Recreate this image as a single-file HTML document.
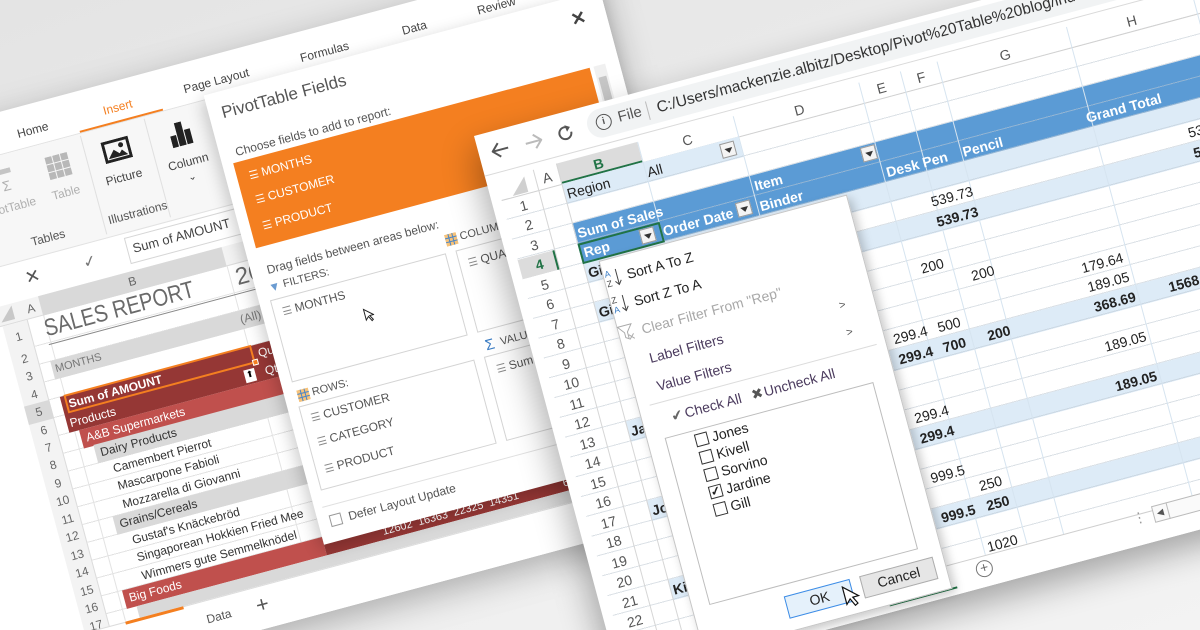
<!DOCTYPE html>
<html style="width:1200px;height:630px;overflow:hidden"><head><meta charset="utf-8"><style>
*{margin:0;padding:0;box-sizing:border-box}
body{width:1200px;height:630px;overflow:hidden;position:relative;background:linear-gradient(160deg,#e4e4e4 0%,#ececec 50%,#f3f3f3 100%);font-family:"Liberation Sans",sans-serif}
.win{position:absolute;left:0;top:0;width:0;height:0;transform-origin:0 0;transform:rotate(-15deg)}
.a{position:absolute}
.c{position:absolute;transform:translate(-50%,-50%);white-space:nowrap}
.l{position:absolute;white-space:nowrap;transform:translateY(-50%);line-height:16px}
#L{font-size:12px;color:#444}
#R{left:474px;top:136px;font-size:14px;color:#222}
.w{color:#fff}
.b{font-weight:bold}
.dd{position:absolute;width:15px;height:15px;background:#f4f4f4;border:1px solid #9a9a9a;transform:translate(-50%,-50%)}
.dd:after{content:"";position:absolute;left:3px;top:5px;border-left:4px solid transparent;border-right:4px solid transparent;border-top:5px solid #333}
.cb{position:absolute;width:13px;height:13px;border:1px solid #333;background:#fff;transform:translateY(-50%)}
.hb{position:absolute;width:8px;height:8px;border-top:1px solid;border-bottom:1px solid;transform:translateY(-50%)}
.hb:after{content:"";position:absolute;left:0;top:2.5px;width:8px;border-top:1px solid}
</style></head><body>

<!-- LEFT WINDOW -->
<div class="win" id="L">
  <div class="a" style="left:-260px;top:108px;width:842px;height:568px;background:#fff;box-shadow:0 10px 34px rgba(0,0,0,.28)"></div>
  <div class="a" style="left:-260px;top:149px;width:842px;height:1px;background:#e2e2e2"></div>
  <div class="c" style="left:-2px;top:134px">Home</div>
  <div class="c" style="left:86px;top:134px;color:#f47f20">Insert</div>
  <div class="c" style="left:188px;top:134px">Page Layout</div>
  <div class="c" style="left:300px;top:134px">Formulas</div>
  <div class="c" style="left:393px;top:134px">Data</div>
  <div class="c" style="left:478px;top:134px">Review</div>
  <div class="a" style="left:43px;top:147px;width:86px;height:2px;background:#f47f20"></div>
  <div class="a" style="left:-260px;top:150px;width:432px;height:108px;background:#f7f7f7;border-bottom:1px solid #e2e2e2"></div>
  <div class="a" style="left:42px;top:152px;width:1px;height:102px;background:#e0e0e0"></div>
  <div class="a" style="left:108px;top:152px;width:1px;height:102px;background:#e0e0e0"></div>
  <svg class="a" style="left:-58px;top:164px" width="28" height="26"><g fill="#c4c4c4"><rect x="0" y="0" width="24" height="5"/><rect x="0" y="7" width="7" height="5"/><rect x="0" y="14" width="7" height="5"/></g><text x="12" y="22" font-size="14" fill="#b0b0b0" font-family="Liberation Sans">Σ</text></svg>
  <svg class="a" style="left:2px;top:164px" width="24" height="24"><g fill="#b8b8b8"><rect x="0" y="0" width="7" height="7"/><rect x="8" y="0" width="7" height="7"/><rect x="16" y="0" width="7" height="7"/><rect x="0" y="8" width="7" height="7"/><rect x="8" y="8" width="7" height="7"/><rect x="16" y="8" width="7" height="7"/><rect x="0" y="16" width="7" height="7"/><rect x="8" y="16" width="7" height="7"/><rect x="16" y="16" width="7" height="7"/></g></svg>
  <svg class="a" style="left:60px;top:164px" width="28" height="22"><rect x="1.5" y="1.5" width="25" height="19" fill="none" stroke="#222" stroke-width="3"/><path d="M4 18 L11 10 L16 15 L19 12 L24 18Z" fill="#222"/><circle cx="19" cy="7" r="2.5" fill="#222"/></svg>
  <svg class="a" style="left:129px;top:164px" width="22" height="24"><g fill="#222"><rect x="0" y="12" width="6" height="12"/><rect x="7" y="0" width="7" height="24"/><rect x="15" y="9" width="6" height="15"/></g></svg>
  <div class="c" style="left:-45px;top:203px;color:#b0b0b0">PivotTable</div>
  <div class="c" style="left:14px;top:203px;color:#b0b0b0">Table</div>
  <div class="c" style="left:74px;top:203px">Picture</div>
  <div class="c" style="left:140px;top:205px">Column</div>
  <div class="c" style="left:140px;top:221px;font-size:10px">⌄</div>
  <div class="c" style="left:-15px;top:242px;color:#555">Tables</div>
  <div class="c" style="left:78px;top:241px;color:#555">Illustrations</div>
  <div class="c" style="left:-40px;top:276px;font-size:18px;color:#555">✕</div>
  <div class="c" style="left:19px;top:276px;font-size:16px;color:#777">✓</div>
  <div class="a" style="left:58px;top:262px;width:140px;height:27px;border:1px solid #d6d6d6;background:#fff"></div>
  <div class="l" style="left:64px;top:275px;font-size:13px">Sum of AMOUNT</div>
  <div class="a" style="left:-260px;top:296px;width:460px;height:20px;background:#f3f3f3;border-bottom:1px solid #dcdcdc"></div>
  <div class="a" style="left:-40px;top:296px;width:190px;height:20px;background:#d9d9d9"></div>
  <div class="c" style="left:-50px;top:306px;color:#666">A</div>
  <div class="c" style="left:55px;top:306px;color:#666">B</div>
  <div class="a" style="left:-82px;top:316px;width:26px;height:320px;background:#f3f3f3;border-right:1px solid #dcdcdc"></div>
  <div class="a" style="left:-82px;top:298px;width:0;height:0;border-left:14px solid transparent;border-bottom:14px solid #c8c8c8"></div>
  <div class="a" style="left:-56px;top:343px;width:640px;height:290px;background:repeating-linear-gradient(to bottom,#e3e3e3 0 1px,transparent 1px 18.45px)"></div>
  <div class="a" style="left:-40px;top:316px;width:1px;height:316px;background:#e3e3e3"></div>
  <div class="a" style="left:150px;top:316px;width:1px;height:316px;background:#e3e3e3"></div>
  <div class="l" style="left:-42px;top:330px;font-size:24px;color:#6a6a6a;transform:translateY(-50%) scaleX(.84);transform-origin:0 50%">SALES REPORT</div>
  <div class="l" style="left:156px;top:330px;font-size:24px;color:#6a6a6a">2017</div>
  <div class="a" style="left:-42px;top:345px;width:214px;height:1px;background:#888"></div>
  <div class="a" style="left:-45px;top:362px;width:217px;height:18.5px;background:#d9d9d9"></div>
  <div class="a" style="left:-45px;top:399px;width:627px;height:37px;background:#953735"></div>
  <div class="a" style="left:-35px;top:436px;width:617px;height:18.5px;background:#c0504d"></div>
  <div class="a" style="left:-25px;top:454px;width:607px;height:18.5px;background:#d9d9d9"></div>
  <div class="a" style="left:-25px;top:528px;width:607px;height:18.5px;background:#d9d9d9"></div>
  <div class="a" style="left:-35px;top:602px;width:207px;height:19px;background:#c0504d"></div>
  <div class="a" style="left:172px;top:602px;width:410px;height:19px;background:#953735"></div>
  <div class="a" style="left:-25px;top:621px;width:607px;height:12px;background:#d9d9d9"></div>
  <div class="a" style="left:-41px;top:398px;width:194px;height:19px;border:2px solid #f47f20"></div>
  <div class="a" style="left:150px;top:413px;width:6px;height:6px;background:#f47f20;border:1px solid #fff"></div>
  <div class="l" style="left:-42px;top:371px;font-size:11px;color:#777">MONTHS</div>
  <div class="c" style="left:160px;top:371px;color:#777">(All)</div>
  <div class="l w b" style="left:-38px;top:408px">Sum of AMOUNT</div>
  <div class="l w" style="left:158px;top:408px">Quarters</div>
  <div class="l w" style="left:-42px;top:427px">Products</div>
  <div class="a" style="left:139px;top:421px;width:11px;height:13px;background:#fff;font-size:9px;text-align:center;color:#000">⬆</div>
  <div class="l w" style="left:160px;top:427px">Qtr1</div>
  <div class="l w" style="left:-30px;top:445px">A&amp;B Supermarkets</div>
  <div class="l" style="left:-20px;top:463px;color:#333">Dairy Products</div>
  <div class="l" style="left:-12px;top:482px;color:#333">Camembert Pierrot</div>
  <div class="l" style="left:-12px;top:500px;color:#333">Mascarpone Fabioli</div>
  <div class="l" style="left:-12px;top:519px;color:#333">Mozzarella di Giovanni</div>
  <div class="l" style="left:-20px;top:537px;color:#333">Grains/Cereals</div>
  <div class="l" style="left:-12px;top:556px;color:#333">Gustaf's Knäckebröd</div>
  <div class="l" style="left:-12px;top:574px;color:#333">Singaporean Hokkien Fried Mee</div>
  <div class="l" style="left:-12px;top:593px;color:#333">Wimmers gute Semmelknödel</div>
  <div class="l w" style="left:-30px;top:611px">Big Foods</div>
  <div class="l w" style="left:232px;top:613px;font-size:11px">12602 &nbsp;16363 &nbsp;22325 &nbsp;14351 &nbsp;&nbsp;&nbsp;&nbsp;&nbsp;&nbsp;&nbsp;&nbsp;&nbsp;&nbsp;&nbsp;&nbsp;&nbsp;&nbsp;60683</div>
  <div class="c" style="left:-69px;top:330px;color:#666">1</div>
  <div class="c" style="left:-69px;top:352.6px;color:#666">2</div>
  <div class="c" style="left:-69px;top:371px;color:#666">3</div>
  <div class="c" style="left:-69px;top:389.5px;color:#666">4</div>
  <div class="a" style="left:-82px;top:399px;width:26px;height:18.5px;background:#d9d9d9"></div>
  <div class="c" style="left:-69px;top:408px;color:#666">5</div>
  <div class="c" style="left:-69px;top:426.5px;color:#666">6</div>
  <div class="c" style="left:-69px;top:445px;color:#666">7</div>
  <div class="c" style="left:-69px;top:463.4px;color:#666">8</div>
  <div class="c" style="left:-69px;top:481.9px;color:#666">9</div>
  <div class="c" style="left:-69px;top:500.3px;color:#666">10</div>
  <div class="c" style="left:-69px;top:518.8px;color:#666">11</div>
  <div class="c" style="left:-69px;top:537.2px;color:#666">12</div>
  <div class="c" style="left:-69px;top:555.7px;color:#666">13</div>
  <div class="c" style="left:-69px;top:574.1px;color:#666">14</div>
  <div class="c" style="left:-69px;top:592.6px;color:#666">15</div>
  <div class="c" style="left:-69px;top:611px;color:#666">16</div>
  <div class="c" style="left:-69px;top:629px;color:#666">17</div>
  <div class="a" style="left:-260px;top:633px;width:842px;height:43px;background:#fff;border-top:1px solid #dcdcdc"></div>
  <div class="a" style="left:-40px;top:633px;width:60px;height:3px;background:#f47f20"></div>
  <div class="c" style="left:52px;top:652px;color:#555">Data</div>
  <div class="c" style="left:97px;top:652px;font-size:22px;color:#555">+</div>
  <div class="a" style="left:172px;top:145px;width:410px;height:465px;background:#fff;box-shadow:-4px 4px 16px rgba(0,0,0,.2)"></div>
  <div class="l" style="left:185px;top:167px;font-size:17px;color:#555">PivotTable Fields</div>
  <div class="c" style="left:554px;top:168px;font-size:18px;color:#444;font-weight:bold">✕</div>
  <div class="l" style="left:188px;top:208px;color:#555">Choose fields to add to report:</div>
  <div class="a" style="left:183px;top:218px;width:369px;height:88px;background:#f47f20"></div>
  <div class="a" style="left:556px;top:218px;width:12px;height:88px;background:#f0f0f0"></div>
  <div class="a" style="left:558px;top:230px;width:8px;height:40px;background:#c6c6c6"></div>
  <div class="hb" style="left:196px;top:234px;color:#fff"></div><div class="l w" style="left:208px;top:234px">MONTHS</div>
  <div class="hb" style="left:196px;top:259px;color:#fff"></div><div class="l w" style="left:208px;top:259px">CUSTOMER</div>
  <div class="hb" style="left:196px;top:286px;color:#fff"></div><div class="l w" style="left:208px;top:286px">PRODUCT</div>
  <div class="l" style="left:188px;top:330px;color:#555">Drag fields between areas below:</div>
  <div class="c" style="left:191px;top:348px;color:#6a9bd1;font-size:12px">▼</div>
  <div class="l" style="left:200px;top:348px;color:#555;font-size:11px">FILTERS:</div>
  <svg class="a" style="left:368px;top:342px" width="12" height="12"><rect x="0" y="0" width="12" height="12" fill="#f6c27a"/><path d="M0 4H12M0 8H12M4 0V12M8 0V12" stroke="#4a86c8"/></svg>
  <div class="l" style="left:383px;top:348px;color:#555;font-size:11px">COLUMNS</div>
  <div class="a" style="left:183px;top:360px;width:182px;height:85px;border:1px solid #d4d4d4"></div>
  <div class="a" style="left:375px;top:360px;width:185px;height:85px;border:1px solid #d4d4d4"></div>
  <div class="hb" style="left:193px;top:374px;color:#888"></div><div class="l" style="left:205px;top:374px;color:#555">MONTHS</div>
  <div class="hb" style="left:385px;top:375px;color:#888"></div><div class="l" style="left:397px;top:375px;color:#555">QUARTERS</div>
  <svg class="a" style="left:270px;top:392px" width="10" height="15"><path d="M1 1V12L4 9L6.5 14L8 13L5.5 8.5L9.5 8.5Z" fill="#fff" stroke="#222"/></svg>
  <svg class="a" style="left:185px;top:454px" width="12" height="12"><rect x="0" y="0" width="12" height="12" fill="#f6c27a"/><path d="M0 4H12M0 8H12M4 0V12M8 0V12" stroke="#4a86c8"/></svg>
  <div class="l" style="left:200px;top:460px;color:#555;font-size:11px">ROWS:</div>
  <div class="c" style="left:384px;top:460px;color:#3b7dc4;font-size:15px">Σ</div>
  <div class="l" style="left:395px;top:460px;color:#555;font-size:11px">VALUES</div>
  <div class="a" style="left:183px;top:470px;width:182px;height:87px;border:1px solid #d4d4d4"></div>
  <div class="a" style="left:375px;top:470px;width:185px;height:87px;border:1px solid #d4d4d4"></div>
  <div class="hb" style="left:193px;top:484px;color:#888"></div><div class="l" style="left:205px;top:484px;color:#555">CUSTOMER</div>
  <div class="hb" style="left:193px;top:509px;color:#888"></div><div class="l" style="left:205px;top:509px;color:#555">CATEGORY</div>
  <div class="hb" style="left:193px;top:537px;color:#888"></div><div class="l" style="left:205px;top:537px;color:#555">PRODUCT</div>
  <div class="hb" style="left:385px;top:485px;color:#888"></div><div class="l" style="left:397px;top:485px;color:#555">Sum of AMOUNT</div>
  <div class="a" style="left:180px;top:573px;width:390px;height:1px;background:#e0e0e0"></div>
  <div class="a" style="left:184px;top:583px;width:12px;height:12px;border:1px solid #999"></div>
  <div class="l" style="left:203px;top:589px;color:#555">Defer Layout Update</div>
</div>

<!-- RIGHT WINDOW -->
<div class="win" id="R">
  <div class="a" style="left:0;top:0;width:930px;height:568px;background:#fff;box-shadow:-6px 14px 34px rgba(0,0,0,.32)"></div>
  <div class="a" style="left:0;top:41px;width:930px;height:1px;background:#dadada"></div>
  <svg class="a" style="left:13px;top:12px" width="18" height="16"><path d="M8 1L1 8L8 15M1 8H17" fill="none" stroke="#555" stroke-width="2"/></svg>
  <svg class="a" style="left:47px;top:13px" width="18" height="16"><path d="M10 1L17 8L10 15M17 8H1" fill="none" stroke="#bbb" stroke-width="2"/></svg>
  <svg class="a" style="left:80px;top:12px" width="18" height="18"><path d="M15 9A6 6 0 1 1 12.5 4" fill="none" stroke="#555" stroke-width="2"/><path d="M10 1L15 4L11 8Z" fill="#555"/></svg>
  <div class="a" style="left:112px;top:6px;width:820px;height:29px;border-radius:15px;background:#f1f3f4"></div>
  <div class="c" style="left:129px;top:20px;width:16px;height:16px;border:1.5px solid #555;border-radius:50%;font-size:10px;font-weight:bold;text-align:center;line-height:13px;color:#555">i</div>
  <div class="l" style="left:144px;top:20px;font-size:15px;color:#555">File</div>
  <div class="a" style="left:174px;top:11px;width:1px;height:19px;background:#bbb"></div>
  <div class="l" style="left:184px;top:21px;font-size:15.5px;color:#333">C:/Users/mackenzie.albitz/Desktop/Pivot%20Table%20blog/index.html</div>
  <div class="a" style="left:10px;top:69px;width:920px;height:1px;background:#d0d0d0"></div>
  <div class="a" style="left:72px;top:48px;width:84px;height:21px;background:#dcdcdc;border-bottom:2px solid #217346"></div>
  <div class="a" style="left:22px;top:52px;width:0;height:0;border-left:16px solid transparent;border-bottom:16px solid #d0d0d0"></div>
  <div class="c" style="left:60px;top:59px;color:#555">A</div>
  <div class="c b" style="left:113px;top:59px;color:#217346">B</div>
  <div class="c" style="left:205px;top:59px;color:#555">C</div>
  <div class="c" style="left:321px;top:59px;color:#555">D</div>
  <div class="c" style="left:406px;top:59px;color:#555">E</div>
  <div class="c" style="left:447px;top:59px;color:#555">F</div>
  <div class="c" style="left:534px;top:59px;color:#555">G</div>
  <div class="c" style="left:665px;top:59px;color:#555">H</div>
  <div class="a" style="left:72px;top:69px;width:183px;height:20.5px;background:#ddebf7"></div>
  <div class="a" style="left:72px;top:151px;width:858px;height:20.5px;background:#ddebf7"></div>
  <div class="a" style="left:72px;top:192px;width:858px;height:20.5px;background:#ddebf7"></div>
  <div class="a" style="left:72px;top:315px;width:858px;height:20.5px;background:#ddebf7"></div>
  <div class="a" style="left:72px;top:397px;width:858px;height:20.5px;background:#ddebf7"></div>
  <div class="a" style="left:72px;top:479px;width:858px;height:20.5px;background:#ddebf7"></div>
  <div class="a" style="left:72px;top:110px;width:858px;height:41px;background:#5b9bd5"></div>
  <div class="a" style="left:10px;top:69px;width:920px;height:468px;background:repeating-linear-gradient(to bottom,transparent 0 19.5px,rgba(190,200,210,.55) 19.5px 20.5px)"></div>
  <div class="a" style="left:48px;top:48px;width:1px;height:489px;background:#d6d6d6"></div>
  <div class="a" style="left:72px;top:48px;width:1px;height:489px;background:#d6d6d6"></div>
  <div class="a" style="left:156px;top:48px;width:1px;height:489px;background:#d6e4f0"></div>
  <div class="a" style="left:255px;top:48px;width:1px;height:489px;background:#d6e4f0"></div>
  <div class="a" style="left:385px;top:48px;width:1px;height:489px;background:#d6e4f0"></div>
  <div class="a" style="left:428px;top:48px;width:1px;height:489px;background:#d6e4f0"></div>
  <div class="a" style="left:466px;top:48px;width:1px;height:489px;background:#d6e4f0"></div>
  <div class="a" style="left:600px;top:48px;width:1px;height:489px;background:#d6e4f0"></div>
  <div class="a" style="left:730px;top:48px;width:1px;height:489px;background:#d6e4f0"></div>
  <div class="a" style="left:10px;top:130.5px;width:38px;height:20.5px;background:#dcdcdc;border-right:2px solid #217346"></div>
  <div class="c" style="left:30px;top:79.5px;color:#555">1</div>
  <div class="c" style="left:30px;top:100px;color:#555">2</div>
  <div class="c" style="left:30px;top:120.5px;color:#555">3</div>
  <div class="c b" style="left:30px;top:141px;color:#217346">4</div>
  <div class="c" style="left:30px;top:161.5px;color:#555">5</div>
  <div class="c" style="left:30px;top:182px;color:#555">6</div>
  <div class="c" style="left:30px;top:202.5px;color:#555">7</div>
  <div class="c" style="left:30px;top:223px;color:#555">8</div>
  <div class="c" style="left:30px;top:243.5px;color:#555">9</div>
  <div class="c" style="left:30px;top:264px;color:#555">10</div>
  <div class="c" style="left:30px;top:284.5px;color:#555">11</div>
  <div class="c" style="left:30px;top:305px;color:#555">12</div>
  <div class="c" style="left:30px;top:325.5px;color:#555">13</div>
  <div class="c" style="left:30px;top:346px;color:#555">14</div>
  <div class="c" style="left:30px;top:366.5px;color:#555">15</div>
  <div class="c" style="left:30px;top:387px;color:#555">16</div>
  <div class="c" style="left:30px;top:407.5px;color:#555">17</div>
  <div class="c" style="left:30px;top:428px;color:#555">18</div>
  <div class="c" style="left:30px;top:448.5px;color:#555">19</div>
  <div class="c" style="left:30px;top:469px;color:#555">20</div>
  <div class="c" style="left:30px;top:489.5px;color:#555">21</div>
  <div class="c" style="left:30px;top:510px;color:#555">22</div>
  <div class="c" style="left:30px;top:530px;color:#555">23</div>
  <div class="l" style="left:75px;top:79.5px">Region</div>
  <div class="l" style="left:158px;top:79.5px">All</div>
  <div class="dd" style="left:242px;top:79px"></div>
  <div class="l w b" style="left:75px;top:121px">Sum of Sales</div>
  <div class="l w b" style="left:258px;top:121px">Item</div>
  <div class="dd" style="left:377px;top:119px"></div>
  <div class="l w b" style="left:76px;top:141px">Rep</div>
  <div class="dd" style="left:142px;top:141px"></div>
  <div class="l w b" style="left:158px;top:141px">Order Date</div>
  <div class="dd" style="left:242px;top:140px"></div>
  <div class="l w b" style="left:258px;top:142px">Binder</div>
  <div class="l w b" style="left:389px;top:142px">Desk Pen</div>
  <div class="l w b" style="left:468px;top:142px">Pencil</div>
  <div class="l w b" style="left:596px;top:141px">Grand Total</div>
  <div class="a" style="left:72px;top:130.5px;width:85px;height:21px;border:2px solid #217346"></div>
  <div class="l b" style="left:75px;top:161.5px">Gill</div>
  <div class="l b" style="left:75px;top:202.5px">Gill Total</div>
  <div class="l b" style="left:75px;top:325.5px">Jardine Total</div>
  <div class="l b" style="left:75px;top:407.5px">Jones Total</div>
  <div class="l b" style="left:75px;top:489.5px">Kivell</div>
  <div class="c" style="left:446px;top:182px">539.73</div>
  <div class="c" style="left:712px;top:182px">539.73</div>
  <div class="c b" style="left:446px;top:202.5px">539.73</div>
  <div class="c b" style="left:712px;top:202.5px">539.73</div>
  <div class="c" style="left:409px;top:243.5px">200</div>
  <div class="c" style="left:456px;top:264px">200</div>
  <div class="c" style="left:574px;top:284.5px">179.64</div>
  <div class="c" style="left:370px;top:305px">299.4</div>
  <div class="c" style="left:410px;top:305px">500</div>
  <div class="c" style="left:575px;top:305px">189.05</div>
  <div class="c b" style="left:370px;top:325.5px">299.4</div>
  <div class="c b" style="left:410px;top:325.5px">700</div>
  <div class="c b" style="left:456px;top:325.5px">200</div>
  <div class="c b" style="left:576px;top:325.5px">368.69</div>
  <div class="c b" style="left:665px;top:325.5px">1568.0900</div>
  <div class="c" style="left:576px;top:366.5px">189.05</div>
  <div class="c" style="left:370px;top:387px">299.4</div>
  <div class="c b" style="left:370px;top:407.5px">299.4</div>
  <div class="c b" style="left:576px;top:407.5px">189.05</div>
  <div class="c" style="left:370px;top:448.5px">999.5</div>
  <div class="c" style="left:409px;top:469px">250</div>
  <div class="c b" style="left:370px;top:489.5px">999.5</div>
  <div class="c b" style="left:411px;top:489.5px">250</div>
  <div class="c" style="left:405px;top:530px">1020</div>
  <div class="a" style="left:0;top:537px;width:930px;height:31px;background:#fff;border-top:1px solid #cfcfcf"></div>
  <div class="c" style="left:381px;top:550px;width:17px;height:17px;border:1.5px solid #777;border-radius:50%;font-size:14px;line-height:13px;text-align:center;color:#666">+</div>
  <div class="c" style="left:544px;top:541px;color:#999;font-size:14px">⋮</div>
  <div class="a" style="left:558px;top:533px;width:200px;height:17px;border:1px solid #bbb;background:#fafafa"></div>
  <div class="a" style="left:558px;top:533px;width:16px;height:17px;border-right:1px solid #bbb;font-size:9px;line-height:16px;text-align:center;color:#555">◀</div>
  <div class="a" style="left:280px;top:560px;width:70px;height:2px;background:#217346"></div>
  <div class="a" style="left:88px;top:153px;width:257px;height:408px;background:#fff;border:1px solid #c6c6c6;box-shadow:3px 4px 10px rgba(0,0,0,.22)"></div>
  <svg class="a" style="left:90px;top:163px" width="18" height="20"><text x="0" y="8" font-size="9" fill="#3b7dc4" font-family="Liberation Sans">A</text><text x="0" y="18" font-size="9" fill="#444" font-family="Liberation Sans">Z</text><path d="M12 2V17M9 14L12 18L15 14" fill="none" stroke="#444"/></svg>
  <div class="l" style="left:112px;top:173px">Sort A To Z</div>
  <svg class="a" style="left:90px;top:190px" width="18" height="20"><text x="0" y="8" font-size="9" fill="#444" font-family="Liberation Sans">Z</text><text x="0" y="18" font-size="9" fill="#3b7dc4" font-family="Liberation Sans">A</text><path d="M12 2V17M9 14L12 18L15 14" fill="none" stroke="#444"/></svg>
  <div class="l" style="left:112px;top:201px">Sort Z To A</div>
  <svg class="a" style="left:88px;top:221px" width="16" height="17"><path d="M1 1H15L9.5 8V15L6.5 13V8Z" fill="none" stroke="#aaa"/><path d="M10 11L15 16M15 11L10 16" stroke="#aaa"/></svg>
  <div class="l" style="left:112px;top:230px;color:#a8a8a8">Clear Filter From "Rep"</div>
  <div class="l" style="left:112px;top:260px;color:#4b3b5e">Label Filters</div>
  <div class="c" style="left:312px;top:259px;font-size:11px;color:#555">&gt;</div>
  <div class="l" style="left:112px;top:289px;color:#4b3b5e">Value Filters</div>
  <div class="c" style="left:312px;top:287px;font-size:11px;color:#555">&gt;</div>
  <div class="a" style="left:100px;top:305px;width:235px;height:1px;background:#dcdcdc"></div>
  <div class="l" style="left:118px;top:322px;color:#666">✔</div>
  <div class="l" style="left:132px;top:322px;color:#4b3b5e">Check All</div>
  <div class="l" style="left:201px;top:322px;color:#555">✖</div>
  <div class="l" style="left:214px;top:322px;color:#4b3b5e">Uncheck All</div>
  <div class="a" style="left:106px;top:341px;width:216px;height:173px;border:1px solid #bdbdbd"></div>
  <div class="cb" style="left:135px;top:352px"></div><div class="l" style="left:152px;top:352px">Jones</div>
  <div class="cb" style="left:135px;top:370px"></div><div class="l" style="left:152px;top:370px">Kivell</div>
  <div class="cb" style="left:135px;top:388px"></div><div class="l" style="left:152px;top:388px">Sorvino</div>
  <div class="cb" style="left:135px;top:406px;font-size:12px;line-height:11px;text-align:center;font-weight:bold">✓</div><div class="l" style="left:152px;top:406px">Jardine</div>
  <div class="cb" style="left:135px;top:424px"></div><div class="l" style="left:152px;top:424px">Gill</div>
  <div class="a" style="left:180px;top:525px;width:68px;height:23px;border:1px solid #3c8ce6;background:#e5f1fb;text-align:center;line-height:21px">OK</div>
  <div class="a" style="left:258px;top:525px;width:76px;height:23px;border:1px solid #adadad;background:#e6e6e6;text-align:center;line-height:21px">Cancel</div>
  <svg class="a" style="left:238px;top:530px" width="16" height="24"><path d="M1 1V19L5.5 14.5L9 22L12 20.5L8.5 13.5L14.5 13.5Z" fill="#fff" stroke="#111" stroke-width="1.2"/></svg>
</div>
</body></html>
